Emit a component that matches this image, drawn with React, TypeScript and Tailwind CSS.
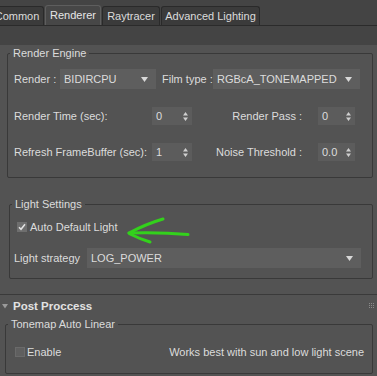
import React from 'react';

const tabs = [
    { label: 'Common', w: 'w-[54px] -ml-[10px]', active: false },
    { label: 'Renderer', w: 'w-[56px]', active: true },
    { label: 'Raytracer', w: 'w-[58px]', active: false },
    { label: 'Advanced Lighting', w: 'w-[99px]', active: false },
];

const DropArrow = () => (
    <svg width="7" height="5" viewBox="0 0 7 5" className="shrink-0">
        <path d="M0 0 H7 L3.5 5 Z" fill="#d8d8d8" />
    </svg>
);

const SpinArrows = () => (
    <svg width="5" height="9" viewBox="0 0 5 9" className="shrink-0">
        <path d="M0 3.5 L2.5 0 L5 3.5 Z M0 5.5 H5 L2.5 9 Z" fill="#cfcfcf" />
    </svg>
);

const Dropdown = ({ value, className }: { value: string; className: string }) => (
    <div className={`flex items-center justify-between shrink-0 h-[20px] bg-[#5e5e5e] pl-[4px] pr-[8px] ${className}`}>
        <span className="whitespace-nowrap">{value}</span>
        <DropArrow />
    </div>
);

const Spinner = ({ value, className }: { value: string; className: string }) => (
    <div className={`flex items-center justify-between shrink-0 h-[18px] bg-[#5c5c5c] pl-[4px] pr-[4px] ${className}`}>
        <span>{value}</span>
        <SpinArrows />
    </div>
);

const Legend = ({ children }: { children: React.ReactNode }) => (
    <legend className="ml-[2px] px-[3px] leading-[16px] whitespace-nowrap">{children}</legend>
);

export default function App() {
    return (
        <div
            className="relative w-[377px] h-[376px] overflow-hidden bg-[#444444] text-[11px] text-[#dcdcdc] whitespace-nowrap"
            style={{ fontFamily: '"Liberation Sans", Arial, sans-serif' }}
        >
            {/* tab strip */}
            <div className="flex items-end gap-[1px] h-[26px] border-b border-[#2b2b2b]">
                {tabs.map((t) => (
                    <div
                        key={t.label}
                        className={`flex items-center justify-center shrink-0 rounded-t-[3px] border border-b-0 ${t.w} ${
                            t.active
                                ? 'h-[20px] bg-[#474747] border-[#5e5e5e] text-[#e6e6e6]'
                                : 'h-[19px] bg-[#3b3b3b] border-[#2a2a2a]'
                        }`}
                    >
                        {t.label}
                    </div>
                ))}
            </div>

            <div className="h-[7px]" />

            <div className="bg-[#535353] h-[343px]">
                <fieldset className="ml-[7px] mt-[12px] w-[366px] border border-[#393939] rounded-[2px]">
                    <Legend>Render Engine</Legend>
                    <div className="pt-[8px] pb-[16px]">
                        <div className="flex items-center h-[20px] pl-[6px]">
                            <span className="w-[46px] shrink-0">Render :</span>
                            <Dropdown value="BIDIRCPU" className="w-[96px]" />
                            <span className="w-[57px] shrink-0 pl-[6px]">Film type :</span>
                            <Dropdown value="RGBcA_TONEMAPPED" className="w-[147px]" />
                        </div>
                        <div className="flex items-center h-[18px] mt-[18px] pl-[6px]">
                            <span className="w-[138px] shrink-0">Render Time (sec):</span>
                            <Spinner value="0" className="w-[40px]" />
                            <span className="flex-1 text-right pr-[16px]">Render Pass :</span>
                            <Spinner value="0" className="w-[37px] mr-[17px]" />
                        </div>
                        <div className="flex items-center h-[18px] mt-[18px] pl-[6px]">
                            <span className="w-[138px] shrink-0">Refresh FrameBuffer (sec):</span>
                            <Spinner value="1" className="w-[40px]" />
                            <span className="flex-1 text-right pr-[16px]">Noise Threshold :</span>
                            <Spinner value="0.0" className="w-[37px] mr-[17px]" />
                        </div>
                    </div>
                </fieldset>

                <fieldset className="ml-[9px] mt-[18px] w-[364px] border border-[#393939] rounded-[2px]">
                    <Legend>Light Settings</Legend>
                    <div className="pt-[7px] pb-[10px]">
                        <div className="flex items-center h-[16px] pl-[7px] gap-[3px]">
                            <div className="flex items-center justify-center w-[10px] h-[10px] bg-[#6e6e6e]">
                                <svg width="8" height="8" viewBox="0 0 8 8">
                                    <path d="M1 4.2 L3 6.3 L7 1.2" stroke="#e4e4e4" strokeWidth="1.5" fill="none" />
                                </svg>
                            </div>
                            <span>Auto Default Light</span>
                        </div>
                        <div className="flex items-center h-[20px] mt-[13px] pl-[4px]">
                            <span className="w-[73px] shrink-0">Light strategy</span>
                            <Dropdown value="LOG_POWER" className="w-[274px]" />
                        </div>
                    </div>
                </fieldset>

                <div className="mt-[15px] h-[1px] bg-[#3a3a3a]" />

                <div className="flex items-center h-[21px] pt-[2px] pl-[2px] pr-[3px]">
                    <svg width="6" height="5" viewBox="0 0 6 5" className="mr-[5px]">
                        <path d="M0 0 H6 L3 4.5 Z" fill="#9a9a9a" />
                    </svg>
                    <span className="font-bold text-[11.5px] text-[#e2e2e2]">Post Proccess</span>
                    <div className="ml-auto grid grid-cols-3 gap-[1px] -mt-[3px]">
                        {Array.from({ length: 9 }).map((_, i) => (
                            <div key={i} className="w-[1px] h-[1px] bg-[#8a8a8a]" />
                        ))}
                    </div>
                </div>

                <fieldset className="ml-[5px] w-[368px] border border-[#393939] rounded-[2px]">
                    <Legend>Tonemap Auto Linear</Legend>
                    <div className="flex items-center h-[16px] mt-[12px] mb-[13px] pl-[9px] pr-[8px]">
                        <div className="w-[10px] h-[10px] bg-[#5f5f5f] border border-[#6a6a6a] mr-[2px]" />
                        <span>Enable</span>
                        <span className="ml-auto">Works best with sun and low light scene</span>
                    </div>
                </fieldset>
            </div>

            {/* hand-drawn annotation arrow */}
            <svg
                className="absolute left-[120px] top-[212px]"
                width="76"
                height="36"
                viewBox="0 0 76 36"
            >
                <g stroke="#33d11c" strokeWidth="3" strokeLinecap="round" fill="none">
                    <path d="M9 21 Q40 20 68 22.5" />
                    <path d="M9 21 Q26 12 43 7" />
                    <path d="M10 22 Q20 27 30 30" />
                </g>
            </svg>
        </div>
    );
}
